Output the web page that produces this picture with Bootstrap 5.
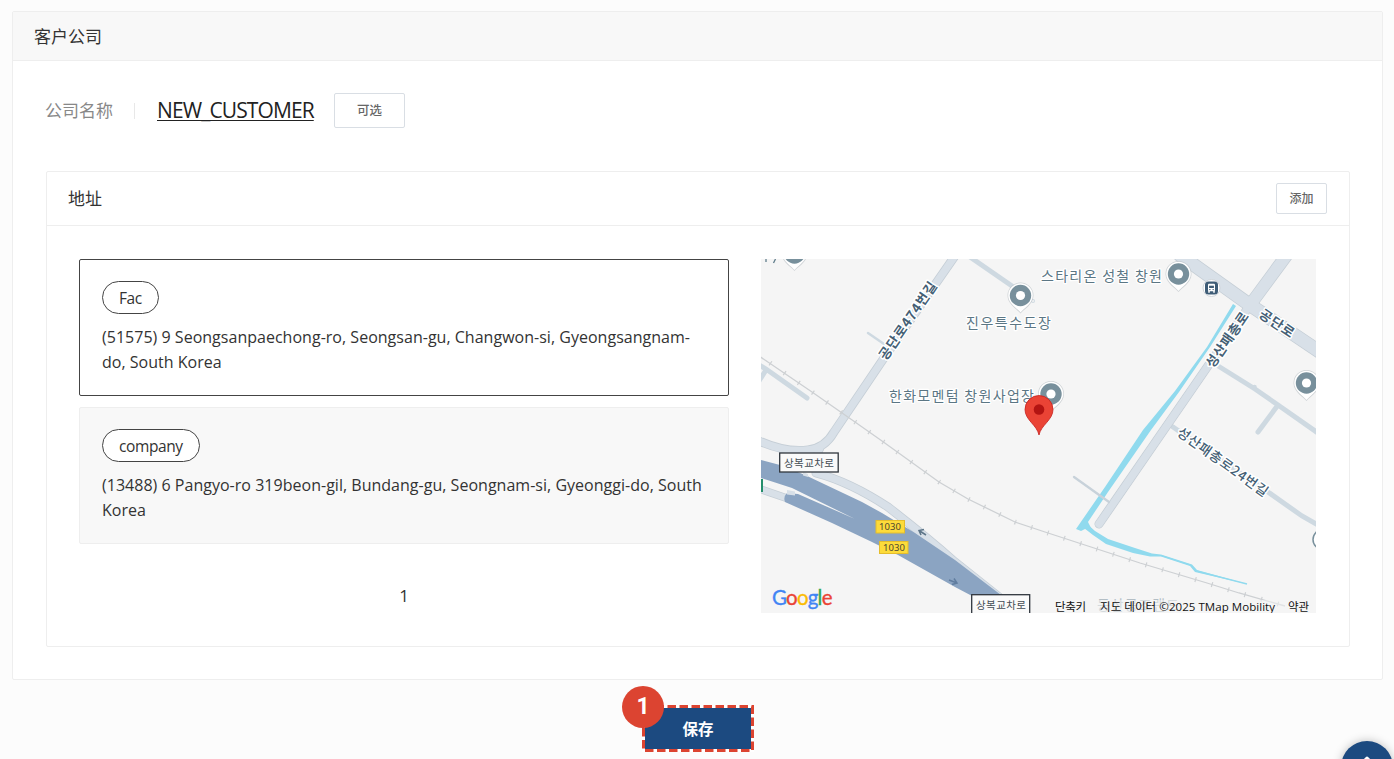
<!DOCTYPE html>
<html lang="zh-CN">
<head>
<meta charset="utf-8">
<meta name="viewport" content="width=device-width, initial-scale=1">
<title>客户公司</title>
<link href="https://cdn.jsdelivr.net/npm/bootstrap@5.3.0/dist/css/bootstrap.min.css" rel="stylesheet">
<style>
  body { background: #fcfcfc; color: #333; font-family: "Open Sans", "Noto Sans CJK SC", sans-serif; font-size: 17px; height: 759px; overflow: hidden; }
  .panel { border: 1px solid #eee; border-radius: 2px; background: #fff; }
  .page-panel { margin: 11px 11px 0 12px; height: 669px; }
  .page-head { height: 49px; padding: 2px 0 0 21px; background: #f8f8f8; border-bottom: 1px solid #eee; }
  .page-body { padding: 32px 32px 0 33px; }
  .company-row { height: 35px; margin-bottom: 43px; }
  .field-label { color: #888; width: 88px; margin-left: -1px; margin-right: 1px; }
  .sep { width: 1px; height: 16px; background: #e8e8e8; margin-right: 22px; }
  .company-link { color: #222; font-size: 21px; letter-spacing: -.9px; width: 177px; text-decoration-skip-ink: none; text-decoration-thickness: 1px; text-underline-offset: 2px; white-space: nowrap; }
  .btn-plain { border: 1px solid #d9dee4; border-radius: 2px; background: #fff; color: #666; padding: 0; font-size: 12.5px; font-weight: 500; }
  .btn-pick { width: 71px; height: 35px; padding-top: 2px; }
  .btn-add { width: 51px; height: 31px; font-size: 12px; margin-right: 22px; }
  .address-panel { height: 476px; }
  .address-head { height: 54px; padding-left: 21px; border-bottom: 1px solid #eee; }
  .address-body { padding: 33px 32px 0; gap: 32px; }
  .address-list { width: 650px; gap: 11px; }
  .addr { height: 137px; padding: 21px 22px; border: 1px solid #eee; border-radius: 2px; background: #f8f8f8; line-height: 25px; font-size: 16px; letter-spacing: .02px; }
  .addr.active { border-color: #444; background: #fff; }
  .tag { display: inline-flex; align-items: center; height: 33px; padding: 2px 16px 0; border: 1px solid #444; border-radius: 17px; background: #fff; font-size: 15.5px; letter-spacing: -.4px; margin-bottom: 11px; }
  .addr-text { white-space: nowrap; }
  .pager { margin-top: 28px; }
  .map { width: 555px; height: 354px; }
  .save-wrap { width: 112px; height: 47px; margin: 25px 0 0 642px; position: relative; }
  .btn-save { width: 100%; height: 100%; background: #1c4a80; color: #fff; border: 0; border-radius: 0; font-size: 15.5px; font-weight: 700; padding: 2px 0 0; }
  .save-frame { position: absolute; inset: 0; width: 112px; height: 47px; pointer-events: none; }
  .step { position: absolute; left: -20px; top: -19px; width: 42px; height: 42px; border-radius: 50%; background: #dc4431; color: #fff; font-family: Roboto, sans-serif; font-size: 23px; font-weight: 700; }
  .to-top { position: fixed; left: 1341px; top: 741px; width: 52px; height: 52px; border-radius: 50%; background: #1c4a80; box-shadow: 0 0 10px rgba(0,0,0,.25); }
</style>
</head>
<body>
<main class="panel page-panel">
  <header class="page-head d-flex align-items-center">客户公司</header>
  <div class="page-body">
    <div class="company-row d-flex align-items-center">
      <span class="field-label">公司名称</span><span class="sep"></span>
      <a class="company-link" href="#">NEW_CUSTOMER</a>
      <button class="btn btn-plain btn-pick" type="button">可选</button>
    </div>
    <section class="panel address-panel">
      <div class="address-head d-flex align-items-center justify-content-between">
        <span>地址</span>
        <button class="btn btn-plain btn-add" type="button">添加</button>
      </div>
      <div class="address-body d-flex">
        <div class="address-list d-flex flex-column">
          <div class="addr active"><span class="tag">Fac</span>
            <div class="addr-text">(51575) 9 Seongsanpaechong-ro, Seongsan-gu, Changwon-si, Gyeongsangnam-<br>do, South Korea</div></div>
          <div class="addr"><span class="tag">company</span>
            <div class="addr-text">(13488) 6 Pangyo-ro 319beon-gil, Bundang-gu, Seongnam-si, Gyeonggi-do, South<br>Korea</div></div>
          <div class="pager text-center">1</div>
        </div>
        <svg class="map" viewBox="761 259 555 354" font-family="'Noto Sans CJK KR', sans-serif">
          <defs>
            <g id="poi"><path d="M0 18C-3 14-13 9-13 0A13 13 0 1 1 13 0C13 9 3 14 0 18Z" fill="#b5bcc2" opacity=".6"/><path d="M0 17C-3 13-12.3 8-12.3 0A12.3 12.3 0 1 1 12.3 0C12.3 8 3 13 0 17Z" fill="#fff"/><circle r="10.7" fill="#78909c"/><circle r="4.6" fill="#fff"/></g>
          </defs>
          <rect x="761" y="259" width="555" height="354" fill="#f5f5f5"/>
          <!-- minor streets -->
          <g fill="none" stroke="#ced9e1" stroke-width="5" stroke-linecap="round">
            <path d="M970 257L1012 286M759 365L766 369L807 398M766 370L759 381"/>
            <path d="M868 333L884 344" stroke-width="2.5"/>
            <path d="M1215 364L1255 389L1278 405L1318 433M1278 405L1258 432M1173 427L1268 492L1302 516L1318 525"/>
            <circle cx="1254.500" cy="387" r=".8" stroke-width="3"/><circle cx="1033" cy="301" r=".5" stroke-width="3"/>
          </g>
          <!-- collector roads: edge, then fill -->
          <g fill="none" stroke-linecap="round">
            <g stroke="#c5ced6">
              <path d="M957 253L884 358L834 432Q825 448 808 450Q785 453 757 440" stroke-width="9"/>
              <path d="M816 473Q850 482 888 507Q928 538 955 562L999 597" stroke-width="9"/>
              <path d="M757 488L792 500" stroke-width="8"/>
              <path d="M820 449L811 466" stroke-width="8"/>
              <path d="M1250 305L1099 524" stroke-width="9"/>
              <path d="M1180 255L1250 305L1320 352" stroke-width="14"/>
              <path d="M1289 252L1250 305" stroke-width="13"/>
            </g>
            <g stroke="#d8e0e8">
              <path d="M957 253L884 358L834 432Q825 448 808 450Q785 453 757 440" stroke-width="7.400"/>
              <path d="M816 473Q850 482 888 507Q928 538 955 562L999 597" stroke-width="7.400"/>
              <path d="M757 488L792 500" stroke-width="6.500"/>
              <path d="M820 449L811 466" stroke-width="6.500"/>
              <path d="M1250 305L1099 524" stroke-width="7.500"/>
              <path d="M1180 255L1250 305L1320 352" stroke-width="12.500"/>
              <path d="M1289 252L1250 305" stroke-width="11.500"/>
            </g>
          </g>
          <path d="M761 460L780 465L805 475L862 502L882 513L915 533L955 560L1001 595L974 597L955 587L898 555L872 542L832 523L785 502Q783 497 787 493L798 494L855 519L873 529.500L853 518L792 488L761 478Z" fill="#8ba4c2"/>
          <path d="M787 490l8 1.500v4l-8-1ZM803 472l5 2v3l-5-1.500Z" fill="#d8e0e8"/>
          <path d="M762 479V492" stroke="#258d6b" stroke-width="2"/>
          <!-- stream -->
          <g fill="#90daee">
            <path d="M1233 304L1207 347L1175 391L1143 430L1105 487L1076 529L1081 531L1085 529L1092 530L1088 522L1108 492L1151 430L1179 392L1210 347L1236 306Z"/>
            <path d="M1085 522L1095 531L1108 539L1135 548L1152 553.500L1161 554.500L1192 564.500L1197 570L1247 584L1195 572L1190 566L1161 556.500L1150 556.500L1133 553L1106 544L1093 535L1084 528Z"/>
          </g>
          <path d="M1161 555.500L1191 565.200L1196 571L1247 584" fill="none" stroke="#90daee" stroke-width="1.300"/>
          <path d="M1074 477L1109 502" stroke="#c8d2da" stroke-width="2.300" stroke-linecap="round"/>
          <!-- railway with ties -->
          <g fill="none" stroke="#cdd0d3">
            <path d="M759 356L812 392L855 422L882 441L939 482L968 499L1015 522L1045 532L1091 547L1140 563L1207 583L1239 593L1285 606" stroke-width="1.300"/>
            <path d="M770 363L812 392L855 422L882 441L939 482L968 499L1015 522L1045 532L1091 547L1140 563L1207 583L1239 593L1285 606" stroke-width="5" stroke-dasharray="1.200 16"/>
          </g>
          <g fill="none" stroke="#5e7689" stroke-width="1.500"><path d="M926 535L919 530.500M924 529.500L919 530.500L921 535"/><path d="M949 580L957 583M954 578.500L957 583L952 584.500" stroke="#607d9f"/></g>
          <use href="#poi" x="794.500" y="253"/><use href="#poi" x="1020.500" y="295.500"/><use href="#poi" x="1178.500" y="274"/><use href="#poi" x="1306.500" y="383"/><use href="#poi" x="1051" y="394"/>
          <path d="M766 259V262M775.500 259L773.500 263" stroke="#607d8b" stroke-width="1.300"/>
          <circle cx="1323" cy="539.500" r="10" fill="#fff" stroke="#78909c" stroke-width="1.500"/>
          <!-- bus stop -->
          <g transform="translate(1211.500 288)"><circle r="8.500" fill="#fff" stroke="#d0d5da"/><rect x="-6.500" y="-6.500" width="13" height="13" rx="3.500" fill="#3e5c76"/><rect x="-3.500" y="-4.300" width="7" height="7.500" rx="1" fill="#fff"/><path d="M-2.400-2.300H2.400V0H-2.400Z" fill="#3e5c76"/><path d="M-2.500 3V4.700M2.500 3V4.700" stroke="#fff" stroke-width="1.500"/><path d="M-2.300 1.600H-1M1 1.600H2.300" stroke="#3e5c76"/></g>
          <!-- place names -->
          <g fill="#5b7684" stroke="#fff" stroke-width="2.500" paint-order="stroke" stroke-linejoin="round" font-size="14">
            <text x="966" y="328" textLength="85">진우특수도장</text>
            <text x="1041" y="280.500" textLength="121">스타리온 성철 창원</text>
            <text x="889" y="400.500" textLength="145">한화모멘텀 창원사업장</text>
          </g>
          <g fill="#455f75" stroke="#fff" stroke-width="3" paint-order="stroke" stroke-linejoin="round" font-size="13.500" font-weight="700">
            <text transform="translate(886 361) rotate(-55.500)" textLength="91">공단로474번길</text>
            <text transform="translate(1213 369) rotate(-55.500)" textLength="64">성산패총로</text>
            <text transform="translate(1258 316.500) rotate(34)" textLength="39">공단로</text>
            <text transform="translate(1176 434.500) rotate(35.500)" textLength="108" font-weight="500">성산패총로24번길</text>
          </g>
          <!-- road shields and junction signs -->
          <g stroke="#e4bd2c"><rect x="876" y="520.500" width="28.500" height="12.500" fill="#fddb3a"/><rect x="879.500" y="541.500" width="28.500" height="12" fill="#fddb3a"/></g>
          <g fill="#4c4630" font-family="'Noto Sans', sans-serif" font-size="9.500"><text x="879" y="530.300" textLength="22">1030</text><text x="883" y="551.200" textLength="22">1030</text></g>
          <g fill="#fafafa" stroke="#30363d" stroke-width="1.300"><rect x="779.700" y="453" width="58.500" height="19"/><rect x="971.700" y="594.700" width="58" height="22"/></g>
          <g fill="#444d55" font-size="10.500"><text x="784" y="466.800" textLength="50">상복교차로</text><text x="976" y="608.500" textLength="50">상복교차로</text></g>
          <!-- pin -->
          <path d="M1039 435C1037 425 1025 420 1025 409.500A14 14 0 0 1 1053 409.500C1053 420 1041 425 1039 435Z" fill="#ea4335" stroke="#c5221f" stroke-width=".8"/><circle cx="1039" cy="409.500" r="5.300" fill="#b31412"/>
          <text x="772" y="605" font-family="Lato, sans-serif" font-size="20.500" textLength="60.500" stroke-width=".35"><tspan fill="#4285f4" stroke="#4285f4">G</tspan><tspan fill="#ea4335" stroke="#ea4335">o</tspan><tspan fill="#fbbc04" stroke="#fbbc04">o</tspan><tspan fill="#4285f4" stroke="#4285f4">g</tspan><tspan fill="#34a853" stroke="#34a853">l</tspan><tspan fill="#ea4335" stroke="#ea4335">e</tspan></text>
          <text x="1097" y="610" font-size="14" fill="#b3bec5" textLength="82">동산공조랜드</text>
          <rect x="1049" y="600" width="267" height="13" fill="#f5f5f5" opacity=".5"/>
          <g fill="#111" font-size="11.500" font-family="'Open Sans', 'Noto Sans CJK KR', sans-serif"><text x="1055" y="610.500" textLength="31">단축키</text><text x="1100" y="610.500" textLength="175">지도 데이터 ©2025 TMap Mobility</text><text x="1288" y="610.500" textLength="21">약관</text></g>
        </svg>
      </div>
    </section>
  </div>
</main>
<div class="save-wrap">
  <button class="btn btn-save" type="button">保存</button>
  <svg class="save-frame" viewBox="0 0 112 47"><rect x="1.500" y="1.500" width="109" height="44" fill="none" stroke="#fff" stroke-width="3"/><rect x="1.500" y="1.500" width="109" height="44" fill="none" stroke="#dc4431" stroke-width="3" stroke-dasharray="8.500 3.500"/></svg>
  <span class="step d-flex align-items-center justify-content-center">1</span>
</div>
<a class="to-top" href="#" aria-label="Top"><svg width="52" height="52" viewBox="0 0 52 52" fill="none" stroke="#fff" stroke-width="3" stroke-linecap="round" stroke-linejoin="round"><path d="M26 17V36M18 25L26 17L34 25"/></svg></a>
</body>
</html>
